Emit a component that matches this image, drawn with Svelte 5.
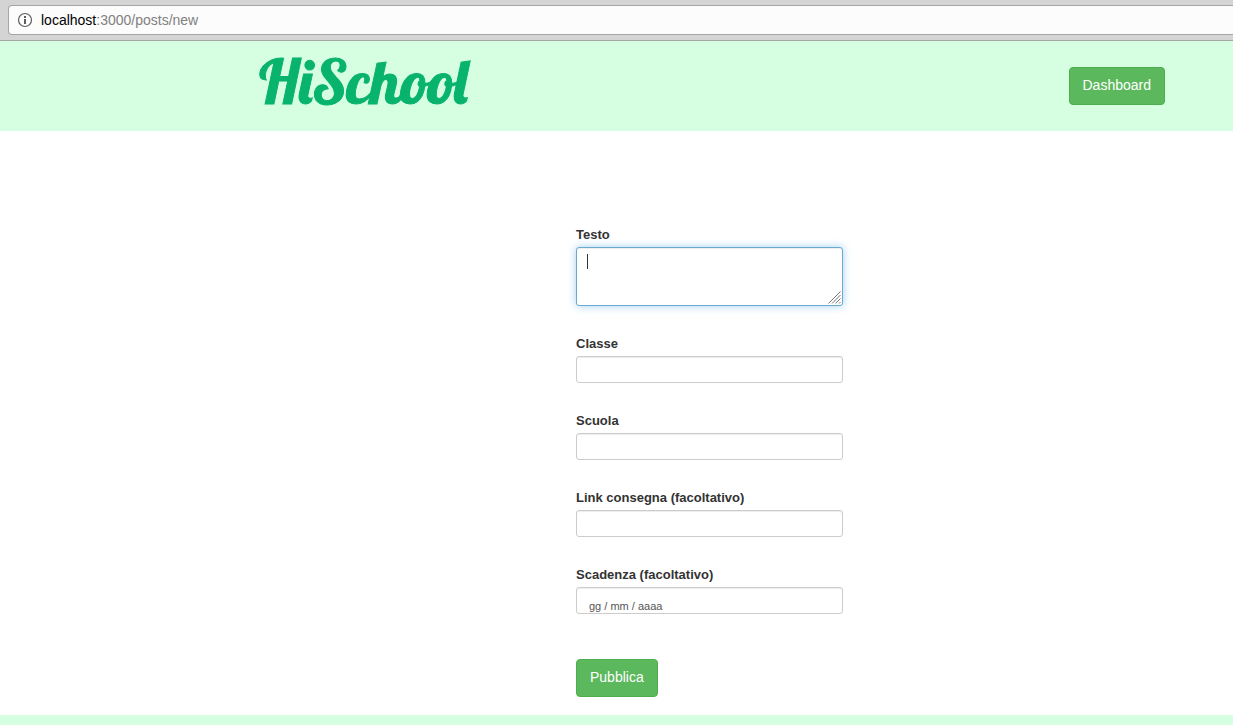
<script>
  let text = $state('');
  let fields = $state([
    { id: 'classe', label: 'Classe', value: '', hint: '' },
    { id: 'scuola', label: 'Scuola', value: '', hint: '' },
    { id: 'link', label: 'Link consegna (facoltativo)', value: '', hint: '' },
    { id: 'scadenza', label: 'Scadenza (facoltativo)', value: '', hint: 'gg / mm / aaaa' }
  ]);
</script>

<div class="browser">
  <div class="address">
    <svg class="info" viewBox="0 0 16 16" aria-hidden="true">
      <circle cx="8" cy="8" r="6.5" fill="none" stroke="#5c5c5c" stroke-width="1.2" />
      <rect x="7" y="4" width="2" height="2" fill="#5c5c5c" />
      <rect x="7" y="7" width="2" height="5" fill="#5c5c5c" />
    </svg>
    <span class="url"><b>localhost</b>:3000/posts/new</span>
  </div>
</div>

<header>
  <a class="logo" href="#home">HiSchool</a>
  <button class="btn" type="button">Dashboard</button>
</header>

<main>
  <form onsubmit={(e) => e.preventDefault()}>
    <div class="group">
      <label for="testo">Testo</label>
      <div class="area">
        <textarea id="testo" bind:value={text}></textarea>
        {#if !text}<span class="caret"></span>{/if}
        <svg class="grip" viewBox="0 0 13 13" aria-hidden="true">
          <path d="M0.5 12.5 12.5 0.5M4 12.5 12.5 4M7.5 12.5 12.5 7.5M11 12.5 12.5 11" fill="none" stroke="#757575" />
        </svg>
      </div>
    </div>
    {#each fields as field (field.id)}
      <div class="group">
        <label for={field.id}>{field.label}</label>
        <input id={field.id} class:date={field.hint} type="text" placeholder={field.hint} bind:value={field.value} />
      </div>
    {/each}
    <button class="btn submit" type="submit">Pubblica</button>
  </form>
</main>

<footer></footer>

<style>
  :global(body) {
    background: #fff;
    color: #333;
    font-family: "Liberation Sans", Arial, sans-serif;
    font-size: 14px;
  }
  .browser {
    box-sizing: border-box;
    height: 41px;
    padding: 5px 0 5px 8px;
    background: #d4d4d4;
    border-bottom: 1px solid #a3a8a4;
  }
  .address {
    box-sizing: border-box;
    display: flex;
    align-items: center;
    gap: 8px;
    height: 30px;
    padding-left: 8px;
    background: #fcfcfc;
    border: 1px solid #a6a6a6;
    border-right: 0;
    border-radius: 4px 0 0 4px;
  }
  .info {
    width: 16px;
    height: 16px;
  }
  .url {
    color: #808080;
    font-size: 14px;
  }
  .url b {
    color: #000;
    font-weight: normal;
  }
  header {
    box-sizing: border-box;
    display: flex;
    align-items: center;
    justify-content: space-between;
    height: 90px;
    padding: 0 68px 0 21%;
    background: #d5ffe0;
  }
  .logo {
    padding-bottom: 10px;
    color: #08b36d;
    font: 61px/80px Lobster, "Liberation Serif", serif;
    text-decoration: none;
    -webkit-text-stroke: 1px #08b36d;
  }
  .btn {
    box-sizing: border-box;
    height: 38px;
    padding: 0 13px 2px;
    background: #5cb85c;
    border: 1px solid #4cae4c;
    border-radius: 4px;
    color: #fff;
    font: 14px/20px "Liberation Sans", Arial, sans-serif;
  }
  main {
    display: grid;
    grid-template-columns: 576fr 267fr 390fr;
    padding: 95px 0 18px;
  }
  form {
    grid-column: 2;
  }
  .group {
    display: flex;
    flex-direction: column;
    gap: 3px;
    margin-bottom: 29px;
  }
  label {
    font-size: 13px;
    font-weight: bold;
    line-height: 18px;
  }
  .area {
    position: relative;
    display: flex;
  }
  textarea,
  input {
    box-sizing: border-box;
    width: 100%;
    height: 27px;
    margin: 0;
    padding: 0 12px;
    background: #fff;
    border: 1px solid #ccc;
    border-radius: 3px;
    box-shadow: inset 0 1px 1px rgba(0, 0, 0, 0.075);
    color: #555;
    font: 14px/20px "Liberation Sans", Arial, sans-serif;
    outline: 0;
  }
  textarea {
    height: 59px;
    padding: 4px 10px;
    border-color: #6aa9d2;
    box-shadow: inset 0 1px 1px rgba(0, 0, 0, 0.075), 0 0 8px rgba(102, 175, 233, 0.6);
    resize: none;
  }
  .caret {
    position: absolute;
    top: 7px;
    left: 11px;
    width: 1px;
    height: 15px;
    background: #333;
    pointer-events: none;
  }
  .grip {
    position: absolute;
    right: 2px;
    bottom: 2px;
    width: 13px;
    height: 13px;
    pointer-events: none;
  }
  .date {
    padding-top: 10px;
    font-size: 11px;
    line-height: 14px;
  }
  input::placeholder {
    color: #555;
    opacity: 1;
  }
  .submit {
    display: block;
    margin-top: 45px;
  }
  footer {
    height: 10px;
    background: #d5ffe0;
  }
</style>
